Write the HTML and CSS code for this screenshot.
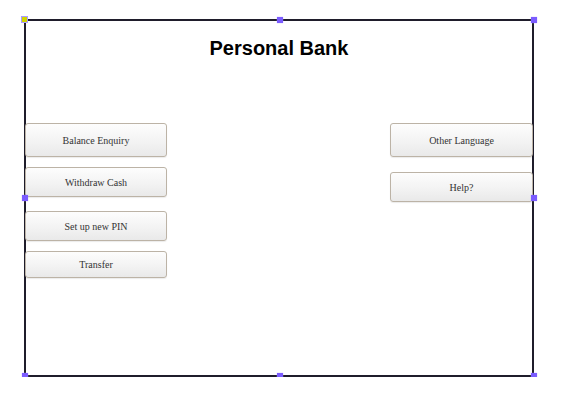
FILE: index.html
```html
<!DOCTYPE html>
<html>
<head>
<meta charset="utf-8">
<link rel="stylesheet" href="styles.css">
</head>
<body>
<div class="frame">
  <h1 class="title">Personal Bank</h1>
  <div class="panels">
    <div class="col col-left">
      <button class="btn btn-tall">Balance Enquiry</button>
      <button class="btn btn-mid gap-a">Withdraw Cash</button>
      <button class="btn btn-mid gap-b">Set up new PIN</button>
      <button class="btn btn-short gap-a">Transfer</button>
    </div>
    <div class="col col-right">
      <button class="btn btn-tall">Other Language</button>
      <button class="btn btn-mid gap-c">Help?</button>
    </div>
  </div>
  <span class="handle h-tl"></span>
  <span class="handle h-tm"></span>
  <span class="handle h-tr"></span>
  <span class="handle h-ml"></span>
  <span class="handle h-mr"></span>
  <span class="handle h-bl"></span>
  <span class="handle h-bm"></span>
  <span class="handle h-br"></span>
</div>
</body>
</html>
```

FILE: styles.css
```css
html, body {
  margin: 0;
  padding: 0;
  background: #ffffff;
}
body {
  padding: 19px 0 0 24px;
}
.frame {
  position: relative;
  box-sizing: border-box;
  width: 510px;
  height: 358px;
  border: 2px solid #1f1d2b;
  display: flex;
  flex-direction: column;
}
.title {
  margin: 16px 0 0 0;
  text-align: center;
  font-family: "Liberation Sans", Arial, sans-serif;
  font-weight: bold;
  font-size: 20px;
  line-height: 23px;
  color: #000;
}
.panels {
  display: flex;
  justify-content: space-between;
  margin-top: 63px;
  margin-left: -1px;
  margin-right: -1px;
}
.col {
  display: flex;
  flex-direction: column;
}
.col-left { width: 142px; }
.col-right { width: 143px; }
.btn {
  box-sizing: border-box;
  width: 100%;
  margin: 0;
  padding: 0;
  border: 1px solid #bcb3a6;
  border-radius: 3px;
  background: linear-gradient(#fdfdfd 0%, #f3f3f3 55%, #e9e9e9 100%);
  box-shadow: 0 1px 1px rgba(0,0,0,0.08);
  font-family: "Liberation Serif", "Times New Roman", serif;
  font-size: 10px;
  color: #333;
}
.btn-tall { height: 34px; }
.btn-mid { height: 30px; }
.btn-short { height: 27px; }
.gap-a { margin-top: 10px; }
.gap-b { margin-top: 14px; }
.gap-c { margin-top: 15px; }
.handle {
  position: absolute;
  width: 6px;
  height: 6px;
  background: #7b5cff;
  box-shadow: 0 0 1px #b8a8ff;
}
.h-tl { left: -4px; top: -4px; background: #d2d400; box-shadow: 0 0 0 1px #a99cff; width: 5px; height: 5px; }
.h-tm { left: 251px; top: -4px; }
.h-tr { right: -5px; top: -4px; }
.h-ml { left: -4px; top: 174px; }
.h-mr { right: -5px; top: 174px; }
.h-bl { left: -4px; bottom: -4px; }
.h-bm { left: 251px; bottom: -4px; }
.h-br { right: -5px; bottom: -4px; }
```
